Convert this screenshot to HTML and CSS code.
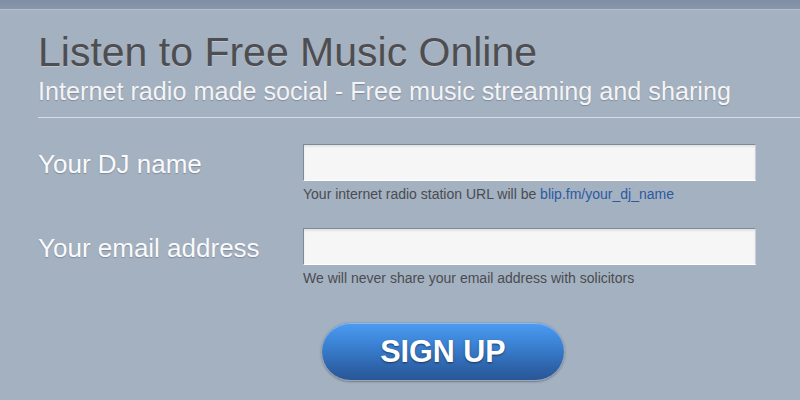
FILE: index.html
```html
<!DOCTYPE html>
<html>
<head>
<meta charset="utf-8">
<link rel="stylesheet" href="styles.css">
</head>
<body>
<div class="topbar"></div>
<div class="page">
  <h1 class="title">Listen to Free Music Online</h1>
  <h2 class="subtitle">Internet radio made social - Free music streaming and sharing</h2>
  <div class="divider"></div>
  <form class="form">
    <div class="row">
      <label class="label">Your DJ name</label>
      <div class="field">
        <input class="input" type="text">
        <div class="hint">Your internet radio station URL will be <span class="link">blip.fm/your_dj_name</span></div>
      </div>
    </div>
    <div class="row">
      <label class="label">Your email address</label>
      <div class="field">
        <input class="input" type="text">
        <div class="hint">We will never share your email address with solicitors</div>
      </div>
    </div>
    <div class="actions">
      <button type="button" class="signup">SIGN UP</button>
    </div>
  </form>
</div>
</body>
</html>
```

FILE: styles.css
```css
html, body {
  margin: 0;
  padding: 0;
  height: 100%;
}
body {
  background: #a4b1c1;
  font-family: "Liberation Sans", Arial, sans-serif;
  overflow: hidden;
}
.topbar {
  height: 9px;
  background: linear-gradient(#7f8ea3, #8796aa);
  border-bottom: 1px solid #b3bfcc;
}
.page {
  padding: 0 0 0 38px;
}
.title {
  margin: 0;
  padding-top: 20px;
  font-size: 41px;
  font-weight: normal;
  line-height: 44px;
  color: #4e4e50;
  text-shadow: 0 1px 0 rgba(255,255,255,0.25);
}
.subtitle {
  margin: 0;
  padding-top: 2px;
  font-size: 25.2px;
  font-weight: normal;
  line-height: 30px;
  color: #f4f4f4;
  text-shadow: 0 1px 1px rgba(60,70,90,0.35);
}
.divider {
  margin-top: 11px;
  height: 1px;
  background: #d6dde5;
}
.form {
  padding-top: 26px;
}
.row {
  display: flex;
  align-items: flex-start;
  height: 84px;
}
.label {
  width: 265px;
  font-size: 26px;
  color: #fafafa;
  line-height: 36px;
  padding-top: 2px;
  text-shadow: 0 1px 1px rgba(60,70,90,0.35);
}
.field {
  display: flex;
  flex-direction: column;
}
.input {
  box-sizing: border-box;
  width: 453px;
  height: 37px;
  margin: 0;
  border: 1px solid #7d8898;
  border-bottom-color: #ffffff;
  border-right-color: #c8cfd8;
  background: #f6f6f6;
  box-shadow: inset 0 2px 2px rgba(0,0,0,0.08);
}
.hint {
  margin-top: 5px;
  font-size: 14px;
  line-height: 16px;
  color: #4a4c50;
}
.link {
  color: #2c5aa0;
}
.actions {
  padding-left: 283px;
}
.signup {
  width: 244px;
  height: 59px;
  border-radius: 30px;
  border: 1px solid #9aa5b2;
  background: linear-gradient(#4b9cf2 0%, #3a80d2 40%, #2d62a8 80%, #295798 100%);
  box-shadow: 0 1px 2px rgba(60,70,90,0.5), inset 0 1px 0 rgba(255,255,255,0.3);
  color: #ffffff;
  font-family: "Liberation Sans", Arial, sans-serif;
  font-weight: bold;
  font-size: 30.5px;
  text-shadow: 0 1px 2px rgba(0,0,0,0.5);
  padding: 0;
  margin-top: 10px;
}
```
